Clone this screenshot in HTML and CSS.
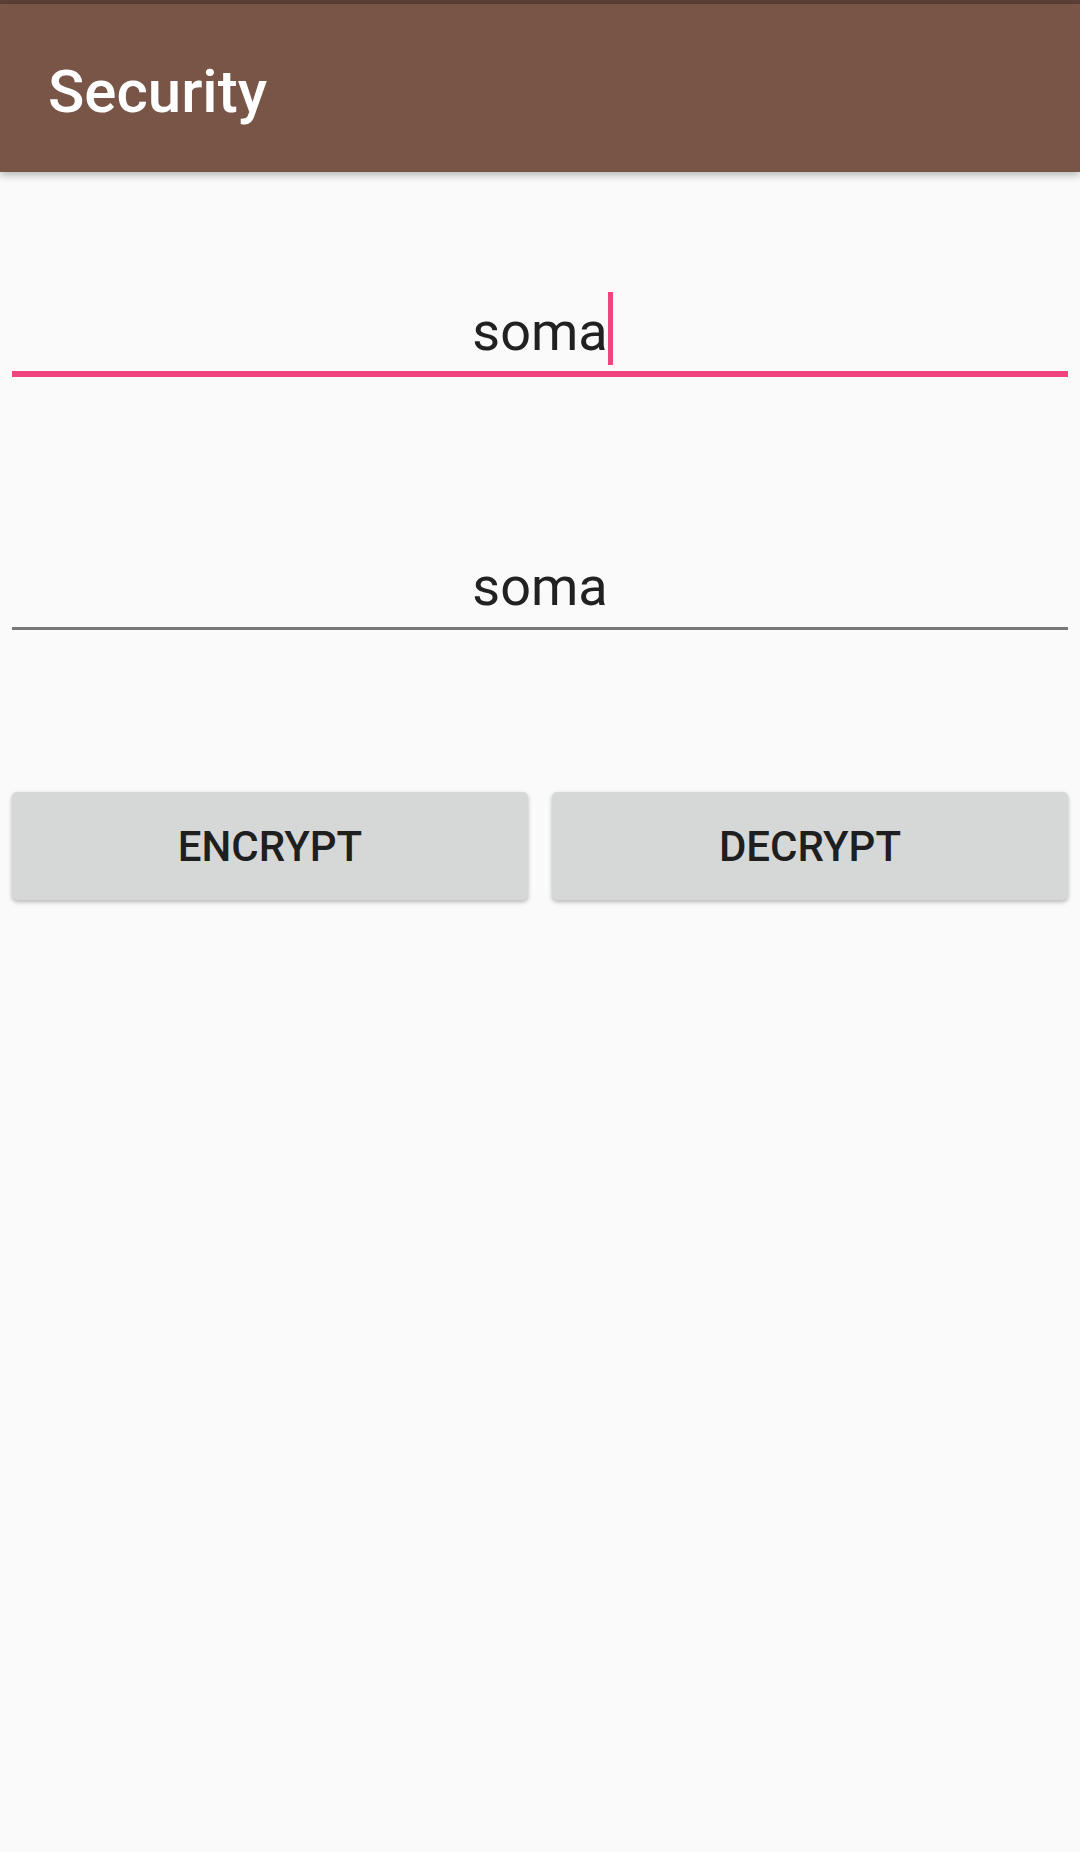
FILE: index.html
```html
<!DOCTYPE html>
<html>
<head>
<meta charset="utf-8">
<title>Security</title>
<link rel="stylesheet" href="styles.css">
</head>
<body>
<div class="status"></div>
<header class="appbar"><h1 class="title">Security</h1></header>
<main class="content">
  <div class="field focused"><span class="value">soma<span class="caret"></span></span></div>
  <div class="field"><span class="value">soma</span></div>
  <div class="buttons">
    <button class="btn">ENCRYPT</button>
    <button class="btn">DECRYPT</button>
  </div>
</main>
</body>
</html>
```
FILE: styles.css
```css
html, body {
  margin: 0;
  padding: 0;
  background: #fafafa;
  font-family: Roboto, "Liberation Sans", sans-serif;
}
body {
  width: 1080px;
  height: 1852px;
  overflow: hidden;
}
.status {
  height: 4px;
  background: #5d4037;
}
.appbar {
  position: relative;
  z-index: 2;
  height: 168px;
  box-sizing: border-box;
  padding: 52px 0 0 48px;
  background: #795548;
  box-shadow: 0 3px 8px rgba(0, 0, 0, 0.28);
}
.title {
  margin: 0;
  font-size: 60px;
  font-weight: 500;
  line-height: normal;
  color: #ffffff;
}
.content {
  padding: 0 12px;
}
.field {
  text-align: center;
  font-size: 54px;
  line-height: normal;
  color: #212121;
  margin-top: 178px;
  padding-bottom: 9px;
  border-bottom: 3px solid #787878;
}
.field.focused {
  margin-top: 0;
  padding-top: 128px;
  padding-bottom: 8px;
  border-bottom: 6px solid #f0447f;
}
.value {
  position: relative;
}
.caret {
  position: absolute;
  left: 100%;
  top: -8px;
  width: 5px;
  height: 73px;
  background: #f0447f;
}
.buttons {
  display: grid;
  grid-template-columns: 1fr 1fr;
  column-gap: 24px;
  margin-top: 162px;
}
.btn {
  height: 108px;
  border: none;
  border-radius: 5px;
  background: #d6d7d7;
  box-shadow: 0 2px 4px rgba(0, 0, 0, 0.28);
  font-family: Roboto, "Liberation Sans", sans-serif;
  font-size: 42px;
  font-weight: 500;
  color: #1f1f1f;
  display: flex;
  align-items: center;
  justify-content: center;
  padding: 0;
}
```
